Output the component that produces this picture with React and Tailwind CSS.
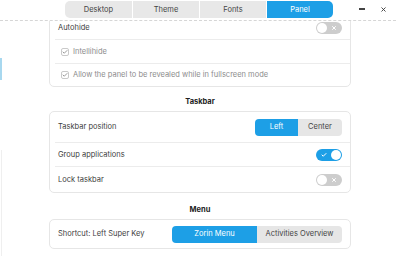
import { Check, X } from "lucide-react";

const BLUE = "bg-[#1d9fe6]";

function Toggle({ on }) {
  if (on) {
    return (
      <div className={`relative h-[12px] w-[26px] rounded-full ${BLUE}`}>
        <Check className="absolute left-[5px] top-[3px] h-[6px] w-[6px] text-white" strokeWidth={4} />
        <div className="absolute right-[1px] top-[1px] h-[10px] w-[10px] rounded-full bg-white" />
      </div>
    );
  }
  return (
    <div className="relative h-[12px] w-[26px] rounded-full bg-[#cdcdcd]">
      <div className="absolute left-[1px] top-[1px] h-[10px] w-[10px] rounded-full bg-white" />
      <X className="absolute right-[5px] top-[3px] h-[6px] w-[6px] text-white" strokeWidth={4} />
    </div>
  );
}

function Checkbox() {
  return (
    <div className="flex h-[8px] w-[8px] items-center justify-center rounded-[2px] border border-[#c9c9c9] bg-white">
      <Check className="h-[6px] w-[6px] text-[#8a8a8a]" strokeWidth={3.5} />
    </div>
  );
}

function Divider() {
  return <div className="ml-[5px] h-px bg-[#ececec]" />;
}

function Segments({ items, widths }) {
  return (
    <div className="flex h-[17px] overflow-hidden rounded-[4px] text-[7.5px]">
      {items.map((it, i) => (
        <div
          key={it}
          className={`flex items-center justify-center ${widths[i]} ${i === 0 ? "bg-[#1d9fe6] text-white" : "bg-[#e6e6e6] text-[#444]"}`}
        >
          {it}
        </div>
      ))}
    </div>
  );
}

export default function App() {
  const tabs = ["Desktop", "Theme", "Fonts", "Panel"];

  return (
    <div
      className="relative h-[256px] w-[396px] overflow-hidden bg-white text-[#404040]"
      style={{ fontFamily: "Inter, 'Noto Sans', sans-serif" }}
    >
      <div className="absolute left-0 top-[58px] h-[22px] w-[2px] bg-[#a8d8ef]" />
      <div className="absolute left-[1px] top-[150px] h-[106px] w-px bg-[#efefef]" />

      {/* header */}
      <div className="relative z-10 flex h-[21px] items-start border-b border-dashed border-[#d6d6d6] bg-white">
        <div className="ml-[65px] mt-[1px] flex h-[17px] overflow-hidden rounded-[5px] text-[7.5px]">
          {tabs.map((t) => (
            <div
              key={t}
              className={`flex w-[67px] items-center justify-center border-l border-white first:border-l-0 ${
                t === "Panel" ? "bg-[#1d9fe6] text-white" : "bg-[#e8e8e8] text-[#444]"
              }`}
            >
              {t}
            </div>
          ))}
        </div>
        <div className="ml-auto mr-[9px] flex h-[18px] items-center gap-[15px] text-[#333]">
          <div className="h-[1.5px] w-[6px] bg-[#444]" />
          <X className="h-[7px] w-[7px]" strokeWidth={3} />
        </div>
      </div>

      {/* content */}
      <div className="flex flex-col pl-[49px] pr-[45px] text-[7.5px]">
        <div className="-mt-[6px] rounded-[5px] border border-[#e6e6e6]">
          <div className="flex h-[23px] items-center justify-between pl-[8px] pr-[8px]">
            <span>Autohide</span>
            <Toggle on={false} />
          </div>
          <Divider />
          <div className="flex h-[23px] items-center gap-[4px] pl-[11px] text-[#8c8c8c]">
            <Checkbox />
            <span>Intellihide</span>
          </div>
          <Divider />
          <div className="flex h-[22px] items-center gap-[4px] pl-[11px] text-[#8c8c8c]">
            <Checkbox />
            <span>Allow the panel to be revealed while in fullscreen mode</span>
          </div>
        </div>

        <div className="mb-[4px] mt-[10px] flex h-[10px] items-center justify-center text-[7.5px] font-bold text-[#222]">
          Taskbar
        </div>

        <div className="rounded-[5px] border border-[#e6e6e6]">
          <div className="flex h-[30px] items-center justify-between pl-[8px] pr-[8px]">
            <span>Taskbar position</span>
            <Segments items={["Left", "Center"]} widths={["w-[43px]", "w-[44px]"]} />
          </div>
          <Divider />
          <div className="flex h-[23px] items-center justify-between pl-[8px] pr-[8px]">
            <span>Group applications</span>
            <Toggle on />
          </div>
          <Divider />
          <div className="flex h-[25px] items-center justify-between pl-[8px] pr-[8px]">
            <span>Lock taskbar</span>
            <Toggle on={false} />
          </div>
        </div>

        <div className="mb-[4px] mt-[12px] flex h-[10px] items-center justify-center text-[7.5px] font-bold text-[#222]">
          Menu
        </div>

        <div className="rounded-[5px] border border-[#e6e6e6]">
          <div className="flex h-[28px] items-center justify-between pl-[8px] pr-[8px]">
            <span>Shortcut: Left Super Key</span>
            <Segments items={["Zorin Menu", "Activities Overview"]} widths={["w-[85px]", "w-[85px]"]} />
          </div>
        </div>
      </div>
    </div>
  );
}
